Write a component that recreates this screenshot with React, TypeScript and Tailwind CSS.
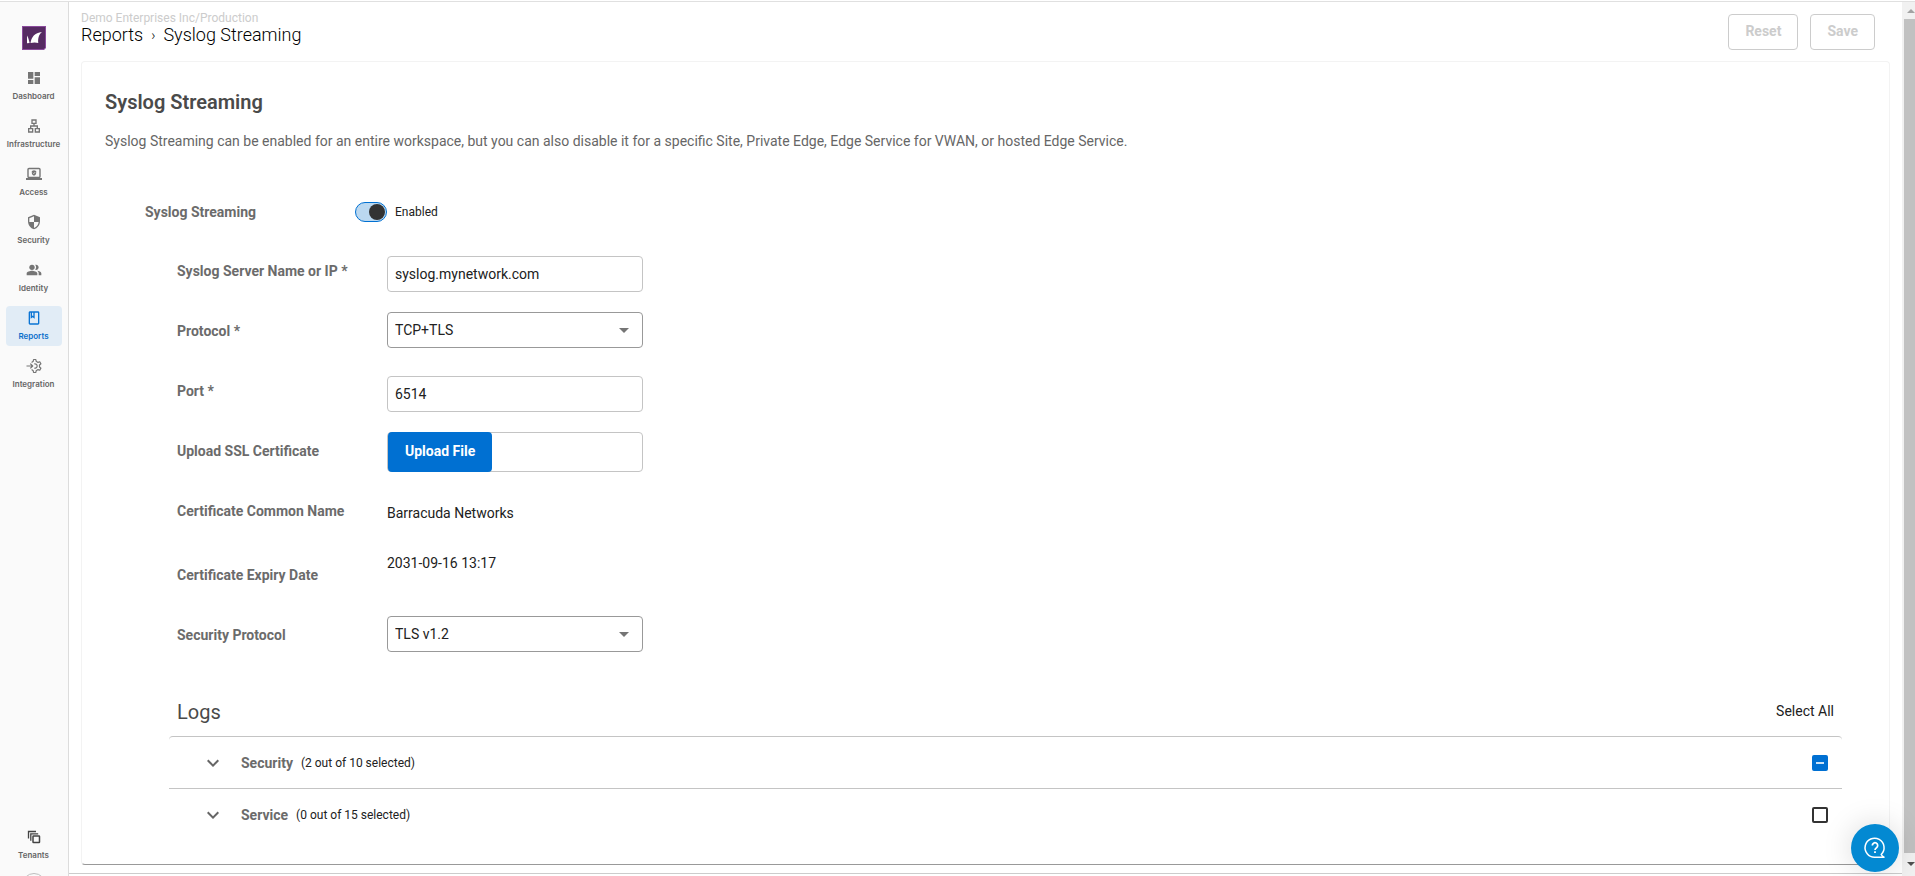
import { useEffect, useRef, useState } from "react";
import type { ReactNode } from "react";
import {
  MdArrowDropDown,
  MdDashboard,
  MdExpandMore,
  MdOutlineClass,
  MdOutlineLan,
  MdPeopleAlt,
  MdSecurity,
} from "react-icons/md";

function Logo() {
  return (
    <svg viewBox="0 0 24 24" className="size-6" aria-hidden="true">
      <path d="M0 0h24v22l-2 2H0z" fill="#8a4a9c" />
      <path d="M1 1h22v20.500l-1.500 1.500H1z" fill="#562a62" />
      <path d="M5 17.200V9.500c1.300 2.200 2 4.800 2.600 7.500z" fill="#fff" />
      <path d="M8.500 17c.8-5.600 4.200-10.400 11.500-11-3.400 2.700-4.200 6.900-3.700 11-2.500-.8-5.100-.7-7.800 0z" fill="#fff" />
    </svg>
  );
}

function AccessIcon() {
  return (
    <svg viewBox="0 0 16 16" className="size-4" fill="none" aria-hidden="true">
      <rect x="2" y="2.500" width="12" height="9" rx="1" stroke="currentColor" strokeWidth="1.400" />
      <path d="M0 12h16v2H0z" fill="currentColor" />
      <path d="M8 4.200l2.200.9v1.600c0 1.500-.9 2.500-2.200 3-1.300-.5-2.200-1.500-2.200-3V5.100z" fill="currentColor" />
      <path d="M7 6.800l.8.800 1.400-1.500" stroke="#fafafa" strokeWidth=".7" />
    </svg>
  );
}

function IntegrationIcon() {
  return (
    <svg viewBox="0 0 16 16" className="size-4" fill="none" stroke="currentColor" strokeWidth="1.200" strokeLinejoin="round" aria-hidden="true">
      <path d="M.5 8h5.500M4.300 5.600L6.700 8l-2.400 2.400" />
      <path d="M5.600 4.400l1.600-1.100.35-1.800h2.300l.35 1.800L12 4.400l1.750-.65 1.150 2L13.500 7v2l1.400 1.250-1.150 2L12 11.600l-1.800 1.100-.35 1.800h-2.300l-.35-1.800-1.600-1.100" />
      <path d="M8.300 5.900A2.200 2.200 0 1 1 8.300 10.100" />
    </svg>
  );
}

function TenantsIcon() {
  return (
    <svg viewBox="0 0 16 16" className="size-4 text-[#444444]" fill="none" stroke="currentColor" strokeWidth="1.300" aria-hidden="true">
      <path d="M2.500 9.500v-7h7.500" />
      <path d="M4.800 11.800v-7h7.400" />
      <rect x="7" y="7" width="6.500" height="6.500" rx=".5" strokeWidth="1.500" />
    </svg>
  );
}

function NavItem({ icon, label, active }: { icon: ReactNode; label: string; active?: boolean }) {
  return (
    <a
      href={`#${label.toLowerCase()}`}
      aria-current={active ? "page" : undefined}
      className={`flex h-10 w-14 flex-col items-center gap-1 rounded pt-1 font-[Inter,sans-serif] text-[8px] leading-3 font-semibold ${
        active ? "bg-[#e1ecf6] text-[#0a6fcb]" : "text-[#666666]"
      }`}
    >
      <span className={active ? "text-[#0a74d4]" : "text-[#757575]"}>{icon}</span>
      {label}
    </a>
  );
}

function Sidebar() {
  return (
    <nav className="flex w-[69px] shrink-0 flex-col items-center overflow-hidden border-r border-[#dcdcdc] bg-[#fafafa] pr-px">
      <a href="#home" aria-label="Home" className="mt-6 mb-4">
        <Logo />
      </a>
      <div className="flex flex-col gap-2">
        <NavItem icon={<MdDashboard size={16} />} label="Dashboard" />
        <NavItem icon={<MdOutlineLan size={16} />} label="Infrastructure" />
        <NavItem icon={<AccessIcon />} label="Access" />
        <NavItem icon={<MdSecurity size={16} />} label="Security" />
        <NavItem icon={<MdPeopleAlt size={16} />} label="Identity" />
        <NavItem icon={<MdOutlineClass size={16} />} label="Reports" active />
        <NavItem icon={<IntegrationIcon />} label="Integration" />
      </div>
      <div className="mt-auto">
        <NavItem icon={<TenantsIcon />} label="Tenants" />
      </div>
      <div className="mt-2 h-[3px] shrink-0 overflow-hidden">
        <div className="size-6 rounded-full border border-[#bdbdbd]" />
      </div>
    </nav>
  );
}

function FieldRow({ label, htmlFor, children }: { label: string; htmlFor?: string; children: ReactNode }) {
  return (
    <div className="flex h-15 items-start">
      <label htmlFor={htmlFor} className="w-[210px] shrink-0 pt-5 text-sm font-bold text-[#6b6b6b]">
        {label}
      </label>
      {children}
    </div>
  );
}

const inputStyle = "mt-[15px] h-9 w-64 rounded border border-[#c4c4c4] bg-white px-[7px] text-sm text-[#212121]";

function SelectField({ id, options }: { id: string; options: string[] }) {
  return (
    <div className="mt-[11px] grid w-64 items-center">
      <select
        id={id}
        className="col-start-1 row-start-1 h-9 appearance-none rounded border border-[#999999] bg-white px-[7px] text-sm text-[#212121]"
      >
        {options.map((o) => (
          <option key={o}>{o}</option>
        ))}
      </select>
      <MdArrowDropDown size={24} className="pointer-events-none col-start-1 row-start-1 mr-[7px] justify-self-end text-[#757575]" />
    </div>
  );
}

function LogRow({ name, selected, total }: { name: string; selected: number; total: number }) {
  const ref = useRef<HTMLInputElement>(null);
  const [count, setCount] = useState(selected);
  const partial = count > 0 && count < total;
  useEffect(() => {
    if (ref.current) ref.current.indeterminate = partial;
  }, [partial]);
  return (
    <div className="flex h-[52px] items-center pr-[14px] pl-8">
      <button type="button" aria-label={`Expand ${name}`} className="text-[#666666]">
        <MdExpandMore size={24} />
      </button>
      <span className="ml-4 text-sm font-bold text-[#6b6b6b]">{name}</span>
      <span className="ml-2 text-xs text-[#212121]">
        ({count} out of {total} selected)
      </span>
      <label className="ml-auto grid place-items-center">
        <input
          ref={ref}
          type="checkbox"
          aria-label={`Select all ${name} logs`}
          checked={count === total}
          onChange={() => setCount(count === total ? 0 : total)}
          className="col-start-1 row-start-1 size-4 appearance-none rounded-xs border-2 border-[#333333] bg-white checked:border-[#0070d2] checked:bg-[#0070d2] indeterminate:border-[#0070d2] indeterminate:bg-[#0070d2]"
        />
        {partial && <span className="pointer-events-none col-start-1 row-start-1 h-0.5 w-2 bg-white/80" />}
      </label>
    </div>
  );
}

function ScrollRail() {
  return (
    <div aria-hidden="true" className="flex w-[13px] shrink-0 flex-col items-end bg-[#f1f1f1]">
      <svg viewBox="0 0 11 17" className="h-[17px] w-[11px]">
        <path d="M3 11l4-4 4 4z" fill="#a3a3a3" />
      </svg>
      <div className="w-[11px] flex-1 bg-[#c1c1c1]" />
      <svg viewBox="0 0 11 23" className="h-[23px] w-[11px]">
        <path d="M3 9h8l-4 4z" fill="#505050" />
      </svg>
    </div>
  );
}

export default function App() {
  const [enabled, setEnabled] = useState(true);
  const outlineButton = "h-9 rounded border border-[#cccccc] bg-white px-4 pb-0.5 text-sm font-bold text-[#cccccc]";
  return (
    <div className="flex h-screen flex-col overflow-hidden bg-white pt-px font-[Roboto,sans-serif] text-[#212121]">
      <div className="flex min-h-0 flex-1 border-t border-[#e0e0e0]">
        <Sidebar />
        <div className="flex min-w-0 flex-1 flex-col">
          <main className="min-h-0 flex-1 overflow-hidden border-b border-[#cccccc] pr-3 pl-3">
            <header className="flex h-[59px] items-start justify-between pr-[15px]">
              <div className="pt-2">
                <p className="text-xs leading-4 text-[#cccccc]">Demo Enterprises Inc/Production</p>
                <h1 className="flex items-center text-lg leading-[18px] font-light text-black">
                  <a href="#reports">Reports</a>
                  <span className="mx-2 text-sm leading-[18px]">›</span>
                  <span>Syslog Streaming</span>
                </h1>
              </div>
              <div className="flex gap-3 pt-3">
                <button type="button" disabled className={outlineButton}>
                  Reset
                </button>
                <button type="button" disabled className={outlineButton}>
                  Save
                </button>
              </div>
            </header>

            <section className="rounded border border-[#f3f3f3] border-b-[#999999] pr-[47px] pb-[23px] pl-[23px]">
              <h2 className="pt-[26px] text-xl leading-7 font-semibold text-[#4a4a4a]">Syslog Streaming</h2>
              <p className="mt-[15px] text-sm text-[#666666]">
                Syslog Streaming can be enabled for an entire workspace, but you can also disable it for a specific Site,
                Private Edge, Edge Service for VWAN, or hosted Edge Service.
              </p>

              <form className="mt-[51px]">
                <div className="flex h-5 items-center pl-10">
                  <label htmlFor="streaming" className="w-[210px] text-sm font-bold text-[#6b6b6b]">
                    Syslog Streaming
                  </label>
                  <input
                    id="streaming"
                    type="checkbox"
                    role="switch"
                    checked={enabled}
                    onChange={() => setEnabled(!enabled)}
                    className="h-5 w-8 appearance-none rounded-full border border-[#0070d2] bg-[#bbd8f0] p-px before:block before:size-4 before:rounded-full before:bg-[#333333] checked:before:ml-auto"
                  />
                  <span className="ml-2 text-xs">{enabled ? "Enabled" : "Disabled"}</span>
                </div>

                <div className="mt-[19px] pl-18">
                  <FieldRow label="Syslog Server Name or IP *" htmlFor="server">
                    <input id="server" type="text" defaultValue="syslog.mynetwork.com" className={inputStyle} />
                  </FieldRow>
                  <FieldRow label="Protocol *" htmlFor="protocol">
                    <SelectField id="protocol" options={["TCP+TLS", "TCP", "UDP"]} />
                  </FieldRow>
                  <FieldRow label="Port *" htmlFor="port">
                    <input id="port" type="text" defaultValue="6514" className={inputStyle} />
                  </FieldRow>
                  <FieldRow label="Upload SSL Certificate" htmlFor="upload">
                    <div className="mt-[11px] flex h-10 w-64 rounded border border-[#c4c4c4]">
                      <button
                        id="upload"
                        type="button"
                        className="-my-px rounded bg-[#0070d2] px-[17px] pb-0.5 text-sm font-bold text-white"
                      >
                        Upload File
                      </button>
                    </div>
                  </FieldRow>
                  <FieldRow label="Certificate Common Name">
                    <span className="pt-[22px] text-sm">Barracuda Networks</span>
                  </FieldRow>
                  <div className="flex h-16 items-start">
                    <span className="w-[210px] pt-6 text-sm font-bold text-[#6b6b6b]">Certificate Expiry Date</span>
                    <span className="pt-3 text-sm">2031-09-16 13:17</span>
                  </div>
                  <FieldRow label="Security Protocol" htmlFor="security-protocol">
                    <SelectField id="security-protocol" options={["TLS v1.2", "TLS v1.3"]} />
                  </FieldRow>
                </div>

                <div className="mt-8 ml-16">
                  <div className="flex h-[39px] items-start justify-between pr-2 pl-2">
                    <h3 className="pt-px text-xl leading-7 text-[#4a4a4a]">Logs</h3>
                    <button type="button" className="pt-1 text-sm">
                      Select All
                    </button>
                  </div>
                  <div className="divide-y divide-[#c4c4c4] rounded-t border-t border-[#c4c4c4]">
                    <LogRow name="Security" selected={2} total={10} />
                    <LogRow name="Service" selected={0} total={15} />
                  </div>
                </div>
              </form>
            </section>
          </main>
          <div className="h-0.5" />
        </div>
        <ScrollRail />
      </div>

      <button
        type="button"
        aria-label="Help"
        className="fixed right-4 bottom-1 grid size-12 place-items-center rounded-full bg-[#0389d2] text-white shadow-[0_0_30px_rgba(0,0,0,0.15)]"
      >
        <svg viewBox="0 0 24 24" className="size-6" fill="none" stroke="currentColor" strokeWidth="1.500" aria-hidden="true">
          <path d="M18.200 18.500A9.500 9.500 0 1 0 12 21.200h9c-1.200-.6-2.200-1.500-2.800-2.700z" strokeLinejoin="round" />
          <path d="M9.300 9.500a2.700 2.700 0 1 1 4.200 2.200c-1 .7-1.500 1.100-1.500 2.300" strokeWidth="1.700" />
          <path d="M12 15.300v1.800" strokeWidth="1.800" />
        </svg>
      </button>
    </div>
  );
}
